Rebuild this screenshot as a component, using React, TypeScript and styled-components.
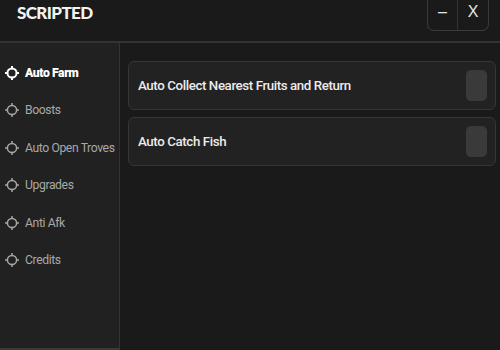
import styled, { createGlobalStyle } from "styled-components";

const GlobalStyle = createGlobalStyle`
  html, body {
    margin: 0;
    padding: 0;
    background: #1a1a1a;
  }
  * {
    box-sizing: border-box;
  }
`;

const Window = styled.div`
  width: 500px;
  height: 350px;
  display: flex;
  flex-direction: column;
  background: #1a1a1a;
  font-family: Roboto, "Liberation Sans", sans-serif;
  overflow: hidden;
`;

const Header = styled.header`
  height: 43px;
  flex-shrink: 0;
  display: flex;
  justify-content: space-between;
  align-items: flex-start;
  border-bottom: 2px solid #333333;
  padding-left: 17px;
  padding-right: 11px;
`;

const Title = styled.h1`
  margin: 0;
  padding-top: 2px;
  font-family: "Lato", sans-serif;
  font-weight: 900;
  font-size: 17px;
  letter-spacing: -0.6px;
  color: #f2f2f2;
`;

const WindowButtons = styled.div`
  display: flex;
  height: 31px;
  border: 1px solid #3a3a3a;
  border-top: 0;
  border-radius: 0 0 7px 7px;
`;

const WindowButton = styled.button<{ $divider?: boolean }>`
  width: 30px;
  height: 100%;
  padding: 0 0 7px 0;
  background: transparent;
  border: 0;
  border-right: ${(p) => (p.$divider ? "1px solid #333" : "0")};
  color: #e6e6e6;
  font-family: "Liberation Sans", sans-serif;
  font-size: 16px;
  display: flex;
  align-items: center;
  justify-content: center;
`;

const Body = styled.div`
  flex: 1;
  display: flex;
  min-height: 0;
`;

const Sidebar = styled.nav`
  width: 120px;
  flex-shrink: 0;
  background: #212121;
  border-right: 1px solid #333333;
  border-bottom: 2px solid #3a3a3a;
  padding-top: 11px;
  display: flex;
  flex-direction: column;
`;

const NavItem = styled.div<{ $active?: boolean }>`
  height: 37.5px;
  display: flex;
  align-items: center;
  gap: 6px;
  padding-left: 5px;
  color: ${(p) => (p.$active ? "#ffffff" : "#a8a8a8")};
  font-weight: ${(p) => (p.$active ? 900 : 400)};
  font-size: 12.2px;
  letter-spacing: -0.4px;
  white-space: nowrap;

  svg {
    flex-shrink: 0;
  }
`;

const Main = styled.main`
  flex: 1;
  padding: 18px 4px 0 8px;
  display: flex;
  flex-direction: column;
  gap: 7px;
`;

const Card = styled.div`
  height: 49px;
  display: flex;
  align-items: center;
  justify-content: space-between;
  padding: 0 8px 0 9px;
  background: #222222;
  border: 1px solid #363636;
  border-radius: 6px;
`;

const CardLabel = styled.span`
  color: #ececec;
  font-weight: 500;
  font-size: 13.3px;
  letter-spacing: -0.4px;
`;

const Toggle = styled.div`
  width: 21px;
  height: 31px;
  border-radius: 5px;
  background: #3a3a3a;
`;

function TabIcon({ active }: { active: boolean }) {
  const c = active ? "#ffffff" : "#a8a8a8";
  const w = active ? 2 : 1.5;
  return (
    <svg width="14" height="14" viewBox="0 0 14 14" fill="none">
      <circle cx="7" cy="7" r="4.6" stroke={c} strokeWidth={w} />
      <path
        d="M7 0.5V2.4M7 11.6V13.5M0.5 7H2.4M11.6 7H13.5"
        stroke={c}
        strokeWidth={w}
        strokeLinecap="round"
      />
    </svg>
  );
}

const navItems = [
  "Auto Farm",
  "Boosts",
  "Auto Open Troves",
  "Upgrades",
  "Anti Afk",
  "Credits",
];

const features = ["Auto Collect Nearest Fruits and Return", "Auto Catch Fish"];

function App() {
  return (
    <>
      <GlobalStyle />
      <Window>
        <Header>
          <Title>SCRIPTED</Title>
          <WindowButtons>
            <WindowButton $divider>–</WindowButton>
            <WindowButton>X</WindowButton>
          </WindowButtons>
        </Header>
        <Body>
          <Sidebar>
            {navItems.map((item, i) => (
              <NavItem key={item} $active={i === 0}>
                <TabIcon active={i === 0} />
                {item}
              </NavItem>
            ))}
          </Sidebar>
          <Main>
            {features.map((f) => (
              <Card key={f}>
                <CardLabel>{f}</CardLabel>
                <Toggle />
              </Card>
            ))}
          </Main>
        </Body>
      </Window>
    </>
  );
}

export default App;
